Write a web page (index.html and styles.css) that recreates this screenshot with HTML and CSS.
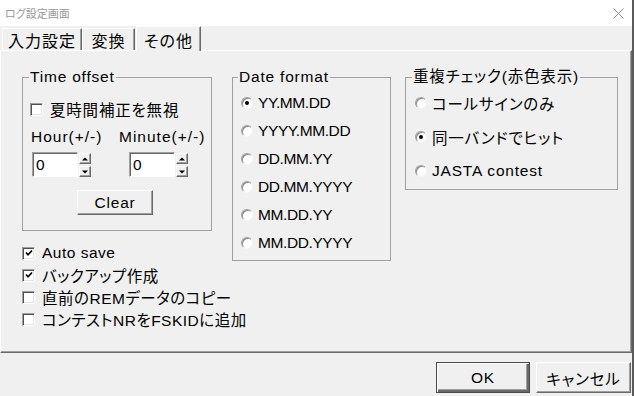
FILE: index.html
```html
<!DOCTYPE html>
<html lang="ja">
<head>
<meta charset="utf-8">
<title>ログ設定画面</title>
<link rel="stylesheet" href="styles.css">
</head>
<body>
<div class="win">
  <div class="titlebar">
    <span class="title">ログ設定画面</span>
    <svg class="close" width="11" height="11" viewBox="0 0 11 11"><path d="M0.5 0.5L10.5 10.5M10.5 0.5L0.5 10.5" stroke="#8a8a8a" stroke-width="1" fill="none"/></svg>
  </div>
  <div class="tabs">
    <div class="tab t1">入力設定</div>
    <div class="tab t2">変換</div>
    <div class="tab t3 active">その他</div>
  </div>
  <div class="panel">
    <div class="col col1">
      <fieldset class="grp g1">
        <legend>Time offset</legend>
        <div class="chk-row first"><span class="cb"></span><span>夏時間補正を無視</span></div>
        <div class="spin-grid">
          <span class="lbl">Hour(+/-)</span>
          <span class="lbl">Minute(+/-)</span>
          <div class="spin s1">
            <span class="field">0</span>
            <span class="arrows">
              <span class="arr"><svg width="6" height="4" viewBox="0 0 6 4"><path d="M0 3.5L3 0.5L6 3.5Z" fill="#000"/></svg></span>
              <span class="arr"><svg width="6" height="4" viewBox="0 0 6 4"><path d="M0 0.5L3 3.5L6 0.5Z" fill="#000"/></svg></span>
            </span>
          </div>
          <div class="spin s2">
            <span class="field">0</span>
            <span class="arrows">
              <span class="arr"><svg width="6" height="4" viewBox="0 0 6 4"><path d="M0 3.5L3 0.5L6 3.5Z" fill="#000"/></svg></span>
              <span class="arr"><svg width="6" height="4" viewBox="0 0 6 4"><path d="M0 0.5L3 3.5L6 0.5Z" fill="#000"/></svg></span>
            </span>
          </div>
        </div>
        <button class="btn clear">Clear</button>
      </fieldset>
      <div class="checklist">
        <div class="chk-row"><span class="cb on"><svg width="8" height="8" viewBox="0 0 8 8"><path d="M1 3.5L3 5.8L7 1.5" stroke="#000" stroke-width="1.7" fill="none"/></svg></span><span>Auto save</span></div>
        <div class="chk-row"><span class="cb on"><svg width="8" height="8" viewBox="0 0 8 8"><path d="M1 3.5L3 5.8L7 1.5" stroke="#000" stroke-width="1.7" fill="none"/></svg></span><span>バックアップ作成</span></div>
        <div class="chk-row"><span class="cb"></span><span>直前のREMデータのコピー</span></div>
        <div class="chk-row"><span class="cb"></span><span>コンテストNRをFSKIDに追加</span></div>
      </div>
    </div>
    <fieldset class="grp g2">
      <legend>Date format</legend>
      <div class="radio-row"><span class="rb on"></span><span class="df">YY.MM.DD</span></div>
      <div class="radio-row"><span class="rb"></span><span class="df">YYYY.MM.DD</span></div>
      <div class="radio-row"><span class="rb"></span><span class="df">DD.MM.YY</span></div>
      <div class="radio-row"><span class="rb"></span><span class="df">DD.MM.YYYY</span></div>
      <div class="radio-row"><span class="rb"></span><span class="df">MM.DD.YY</span></div>
      <div class="radio-row"><span class="rb"></span><span class="df">MM.DD.YYYY</span></div>
    </fieldset>
    <fieldset class="grp g3">
      <legend>重複チェック(赤色表示)</legend>
      <div class="radio-row tall"><span class="rb"></span><span>コールサインのみ</span></div>
      <div class="radio-row tall"><span class="rb on"></span><span>同一バンドでヒット</span></div>
      <div class="radio-row tall"><span class="rb"></span><span>JASTA contest</span></div>
    </fieldset>
  </div>
  <div class="footer">
    <button class="btn ok default">OK</button>
    <button class="btn cancel">キャンセル</button>
  </div>
</div>
</body>
</html>
```

FILE: styles.css
```css
* { box-sizing: border-box; }
html, body { margin: 0; padding: 0; }
body {
  width: 634px;
  height: 396px;
  overflow: hidden;
  background: #5b5b5b;
  font-family: "Liberation Sans", "Noto Sans CJK JP", sans-serif;
  font-size: 15.5px;
  letter-spacing: 0.8px;
  font-feature-settings: "palt";
  color: #000;
  white-space: nowrap;
}
.win {
  width: 632px;
  height: 396px;
  background: #f0f0f0;
  display: flex;
  flex-direction: column;
}
.titlebar {
  height: 26px;
  flex: none;
  background: #fff;
  display: flex;
  align-items: center;
  justify-content: space-between;
  padding: 0 8px 0 5px;
}
.title { font-size: 11px; letter-spacing: 0; color: #999; }
.tabs {
  height: 24px;
  flex: none;
  display: flex;
  align-items: flex-end;
  padding-left: 2px;
  position: relative;
  z-index: 1;
}
.tab {
  height: 22px;
  display: flex;
  align-items: center;
  justify-content: center;
  border-top: 1px solid #fff;
  border-left: 1px solid #fff;
  border-right: 1px solid #696969;
  box-shadow: inset -1px 0 #a0a0a0;
  background: #f0f0f0;
  font-size: 16px;
  letter-spacing: 1px;
}
.t1 { width: 80px; }
.t2 { width: 53px; }
.t3 { width: 65px; }
.tab.active {
  height: 25px;
  margin-bottom: -1px;
  margin-left: 1px;
  padding-top: 1px;
}
.panel {
  height: 303px;
  flex: none;
  border-top: 1px solid #fff;
  border-left: 1px solid #fff;
  border-right: 1px solid #696969;
  border-bottom: 1px solid #696969;
  box-shadow: inset -1px -1px #a0a0a0;
  display: flex;
  align-items: flex-start;
  padding: 18px 0 0 21px;
}
.col1 { width: 190px; flex: none; display: flex; flex-direction: column; }
.grp {
  margin: 0;
  border: 1px solid #a0a0a0;
  padding: 0;
  min-width: 0;
  flex: none;
}
.grp legend {
  padding: 0 1px;
  height: 16px;
  line-height: 16px;
  margin-left: -1px;
}
.g1 { width: 190px; height: 162px; padding-left: 7px; }
.g2 { width: 159px; height: 192px; margin-left: 20px; padding: 4px 0 0 8px; }
.g3 { width: 213px; height: 121px; margin-left: 14px; padding: 1px 0 0 9px; }
.g2 legend, .g3 legend { margin-left: -3px; }

.chk-row {
  height: 22px;
  display: flex;
  align-items: center;
  gap: 7px;
}
.chk-row.first { height: 20px; margin-top: 14px; }
.cb {
  width: 13px;
  height: 13px;
  flex: none;
  background: #fff;
  border: 1px solid;
  border-color: #a0a0a0 #fff #fff #a0a0a0;
  box-shadow: inset 1px 1px #505050, inset -1px -1px #e3e3e3;
  display: flex;
  align-items: center;
  justify-content: center;
}
.checklist { margin-top: 11px; width: 300px; letter-spacing: 0.5px; }

.spin-grid {
  display: grid;
  grid-template-columns: 88px 1fr;
  grid-template-rows: 18px 25px;
  row-gap: 6px;
  margin: 9px 0 0 1px;
}
.lbl { line-height: 18px; letter-spacing: 1px; }
.spin { display: flex; align-items: flex-start; }
.s1 { margin-left: 1px; }
.s2 { margin-left: 10px; }
.field {
  width: 46px;
  height: 25px;
  background: #fff;
  border: 1px solid;
  border-color: #a0a0a0 #fff #fff #a0a0a0;
  box-shadow: inset 1px 1px #696969;
  padding-left: 3px;
  line-height: 23px;
}
.arrows {
  display: flex;
  flex-direction: column;
  gap: 2px;
  margin: 1px 0 0 1px;
}
.arr {
  width: 12px;
  height: 11px;
  background: #f0f0f0;
  border: 1px solid;
  border-color: #fff #696969 #696969 #fff;
  box-shadow: inset -1px -1px #a0a0a0;
  display: flex;
  align-items: center;
  justify-content: center;
}
.arr svg { display: block; }

.btn {
  font: inherit;
  letter-spacing: inherit;
  color: #000;
  background: #f0f0f0;
  border: 1px solid;
  border-color: #fff #696969 #696969 #fff;
  box-shadow: inset -1px -1px #a0a0a0;
  padding: 0;
  display: flex;
  align-items: center;
  justify-content: center;
}
.clear { width: 76px; height: 25px; margin: 13px 0 0 47px; }

.radio-row {
  height: 28px;
  display: flex;
  align-items: center;
  gap: 5px;
}
.radio-row.tall { height: 34px; }
.df { letter-spacing: -0.4px; }
.rb {
  width: 12px;
  height: 12px;
  flex: none;
  border-radius: 50%;
  background: #fff;
  border: 1px solid;
  border-color: #a0a0a0 #f4f4f4 #f4f4f4 #a0a0a0;
  box-shadow: inset 1px 1px #8a8a8a;
  display: flex;
  align-items: center;
  justify-content: center;
}
.rb.on::after {
  content: "";
  width: 4px;
  height: 4px;
  border-radius: 50%;
  background: #000;
}

.footer {
  height: 43px;
  flex: none;
  display: flex;
  justify-content: flex-end;
  align-items: flex-start;
  gap: 6px;
  padding: 9px 1px 0 0;
}
.ok { width: 94px; height: 31px; }
.cancel { width: 95px; height: 31px; }
.btn.default {
  border: 1px solid #4a4a4a;
  box-shadow: inset 1px 1px #fff, inset -2px -2px #696969, inset -3px -3px #a0a0a0;
}
```
